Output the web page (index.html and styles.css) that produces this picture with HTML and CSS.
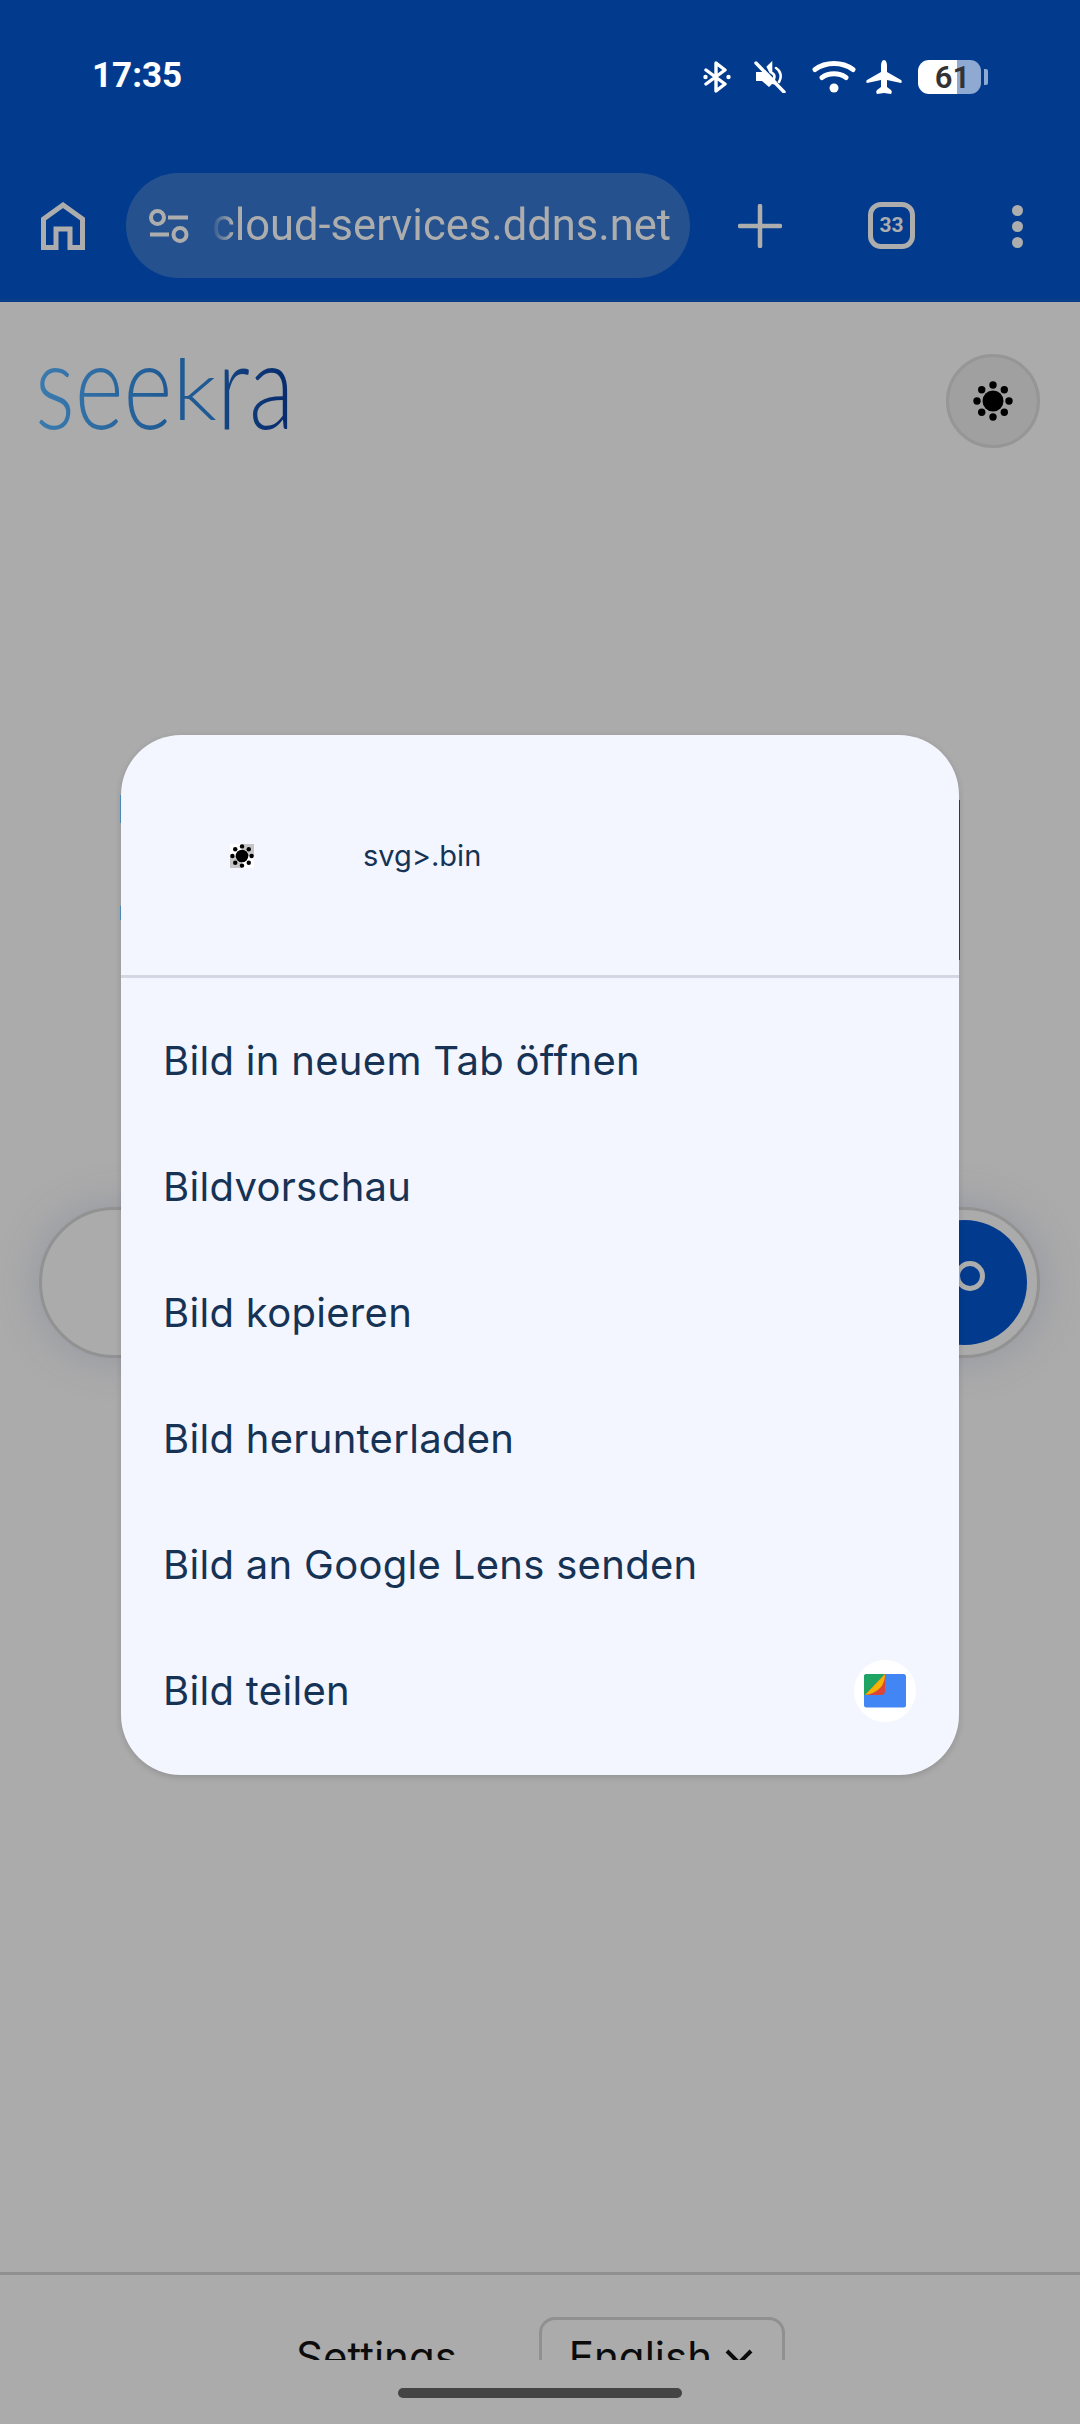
FILE: index.html
```html
<!DOCTYPE html>
<html lang="de">
<head>
  <meta charset="UTF-8">
  <meta name="viewport" content="width=device-width, initial-scale=1.0">
  <title>seekra</title>
  <link rel="stylesheet" href="styles.css">
</head>
<body>

  <!-- Android status bar -->
  <div class="status-bar">
    <span class="clock">17:35</span>
    <div class="status-icons">
      <svg class="ic-bt" width="28" height="32" viewBox="0 0 28 32"><path d="M3 9 22 23 13 30V2l9 7L3 23" fill="none" stroke="#fff" stroke-width="3.4" stroke-linejoin="round" stroke-linecap="round"/><circle cx="2.5" cy="16" r="2.2" fill="#fff"/><circle cx="25.5" cy="16" r="2.2" fill="#fff"/></svg>
      <svg class="ic-mute" width="32" height="32" viewBox="0 0 32 32"><path d="M2 11h6l3-2 12 12v3l-5-1-3 3-7-6H2z" fill="#fff"/><path d="M14 6l3-3v9zM22 7c5 3 6 9 3 14M18 12c2 1 3 3 2 6" fill="none" stroke="#fff" stroke-width="2.6" stroke-linecap="round"/><path d="M2 2 30 31" stroke="#fff" stroke-width="3.4" stroke-linecap="round"/></svg>
      <svg class="ic-wifi" width="44" height="34" viewBox="0 0 44 34"><path d="M3 9.5c11-8 27-8 38 0M10 17.5c7-5 17-5 24 0" fill="none" stroke="#fff" stroke-width="5" stroke-linecap="round"/><circle cx="22" cy="28" r="4.5" fill="#fff"/></svg>
      <svg class="ic-plane" width="36" height="34" viewBox="0 0 36 34"><path d="M18 0c2 0 3 3 3 6v6l14 8c1 .6 1 2.500 0 3l-14-3v7l4 3c1 1 1 3 0 4l-7-1-7 1c-1-1-1-3 0-4l4-3v-7L1 23c-1-.5-1-2.400 0-3l14-8V6c0-3 1-6 3-6z" fill="#fff"/></svg>
      <div class="battery">
        <div class="battery-body"><span class="battery-level">61</span></div>
        <div class="battery-nub"></div>
      </div>
    </div>
  </div>

  <!-- Browser toolbar -->
  <div class="toolbar">
    <svg class="home-icon" width="44" height="48" viewBox="0 0 44 48"><path d="M2.500 45.500V17L22 3l19.500 14v28.500H29V27H15v18.500z" fill="none" stroke="#adadad" stroke-width="5"/></svg>
    <div class="url-pill">
      <svg class="tune-icon" width="40" height="34" viewBox="0 0 40 34"><circle cx="8.500" cy="8.500" r="6.500" fill="none" stroke="#adadad" stroke-width="4"/><circle cx="31" cy="25.500" r="6.500" fill="none" stroke="#adadad" stroke-width="4"/><path d="M19 8.500h20M1 25.500h19" stroke="#adadad" stroke-width="4"/></svg>
      <div class="url-text">cloud-services.ddns.net</div>
    </div>
    <svg class="plus-icon" width="44" height="44" viewBox="0 0 44 44"><path d="M22 2v40M2 22h40" stroke="#adadad" stroke-width="4.500" stroke-linecap="round"/></svg>
    <div class="tab-count">33</div>
    <div class="dots"><span></span><span></span><span></span></div>
  </div>

  <!-- Page behind the dialog -->
  <div class="page">
    <div class="page-main">
      <div class="page-header">
        <div class="logo">see<span class="logo-k">k</span>ra</div>
        <button class="theme-btn">
          <svg width="40" height="40" viewBox="0 0 40 40"><use href="#sun"/></svg>
        </button>
      </div>
      <div class="search-box">
        <div class="search-btn">
          <svg width="60" height="60" viewBox="0 0 60 60"><circle cx="35" cy="23" r="12.500" fill="none" stroke="#adadad" stroke-width="5"/></svg>
        </div>
      </div>
    </div>
    <div class="footer">
      <span class="footer-link">Settings</span>
      <div class="lang-select">
        <span>English</span>
        <svg width="28" height="16" viewBox="0 0 28 16"><path d="M2 2l12 12L26 2" fill="none" stroke="#0c0c0c" stroke-width="4"/></svg>
      </div>
    </div>
    <div class="nav-bar"><div class="nav-handle"></div></div>
  </div>

  <!-- Image context menu -->
  <div class="dialog">
    <div class="dialog-head">
      <div class="thumb">
        <svg width="24" height="24" viewBox="0 0 40 40"><use href="#sun"/></svg>
      </div>
      <span class="file-name">svg&gt;.bin</span>
    </div>
    <ul class="menu">
      <li>Bild in neuem Tab öffnen</li>
      <li>Bildvorschau</li>
      <li>Bild kopieren</li>
      <li>Bild herunterladen</li>
      <li>Bild an Google Lens senden</li>
      <li>
        Bild teilen
        <div class="share-app">
          <svg width="42" height="34" viewBox="0 0 42 34">
            <rect x="0" y="0" width="42" height="33.500" rx="2.500" fill="#4285f4"/>
            <path d="M0 2.500C0 1 1 0 2.500 0H21L1 21H0z" fill="#1fa463"/>
            <path d="M1 21 21 0v17c0 2-1.500 4-4 4z" fill="#db4437"/>
            <path d="M1 21 21 0c0 4-1 10-5 14s-9 6.500-15 7z" fill="#f4b400"/>
          </svg>
        </div>
      </li>
    </ul>
  </div>

  <svg width="0" height="0" class="defs">
    <symbol id="sun" viewBox="0 0 40 40">
      <circle cx="20" cy="20" r="10.500"/>
      <circle cx="20" cy="4" r="3.700"/><circle cx="20" cy="36" r="3.700"/>
      <circle cx="4" cy="20" r="3.700"/><circle cx="36" cy="20" r="3.700"/>
      <circle cx="8.700" cy="8.700" r="3.700"/><circle cx="31.300" cy="8.700" r="3.700"/>
      <circle cx="8.700" cy="31.300" r="3.700"/><circle cx="31.300" cy="31.300" r="3.700"/>
    </symbol>
  </svg>

</body>
</html>
```

FILE: styles.css
```css
html, body {
  margin: 0;
  padding: 0;
}

body {
  position: relative;
  width: 1080px;
  height: 2424px;
  overflow: hidden;
  display: flex;
  flex-direction: column;
  font-family: Roboto, sans-serif;
  background-color: #ababab;
}

.defs {
  position: absolute;
}

/* status bar */
.status-bar {
  height: 110px;
  flex: none;
  box-sizing: border-box;
  padding: 60px 92px 0 92px;
  display: flex;
  justify-content: space-between;
  align-items: flex-start;
  background-color: #023b8e;
  color: #fff;
}

.clock {
  font-size: 35px;
  line-height: 32px;
  font-weight: 700;
}

.status-icons {
  display: flex;
  align-items: center;
  gap: 10px;
  height: 34px;
}

.ic-bt {
  margin-right: 1px;
}

.ic-mute {
  margin-left: 12px;
}

.ic-wifi {
  margin-left: 16px;
}

.battery {
  display: flex;
  align-items: center;
  gap: 3px;
  margin-left: 6px;
}

.battery-body {
  width: 63px;
  height: 34px;
  border-radius: 11px;
  background: linear-gradient(90deg, #fff 0, #fff 39px, #8eaad2 39px);
  display: flex;
  justify-content: center;
  align-items: center;
}

.battery-level {
  font-size: 31px;
  font-weight: 600;
  color: #333;
  margin-left: 6px;
}

.battery-nub {
  width: 4px;
  height: 16px;
  border-radius: 0 2px 2px 0;
  background-color: #8eaad2;
}

/* toolbar */
.toolbar {
  height: 192px;
  flex: none;
  box-sizing: border-box;
  padding: 63px 0 0 41px;
  display: flex;
  align-items: flex-start;
  background-color: #023b8e;
  border-bottom: 3px solid #0a3d88;
}

.home-icon {
  margin-top: 29px;
  flex: none;
}

.url-pill {
  margin-left: 41px;
  width: 564px;
  height: 105px;
  flex: none;
  border-radius: 53px;
  background-color: #25528f;
  display: flex;
  align-items: center;
  box-sizing: border-box;
  padding: 0 19px 0 23px;
  overflow: hidden;
}

.tune-icon {
  flex: none;
}

.url-text {
  margin-left: 16px;
  flex: 1;
  text-align: right;
  font-size: 43.500px;
  color: #adadad;
  white-space: nowrap;
  -webkit-mask-image: linear-gradient(90deg, transparent 6px, #000 28px);
  mask-image: linear-gradient(90deg, transparent 6px, #000 28px);
}

.plus-icon {
  margin: 31px 0 0 48px;
  flex: none;
}

.tab-count {
  margin: 29px 0 0 86px;
  width: 47px;
  height: 47px;
  flex: none;
  box-sizing: border-box;
  border: 5px solid #adadad;
  border-radius: 13px;
  color: #adadad;
  font-size: 21px;
  font-weight: 700;
  text-align: center;
  line-height: 37px;
}

.dots {
  margin: 32px 0 0 97px;
  display: flex;
  flex-direction: column;
  gap: 5px;
}

.dots span {
  width: 11px;
  height: 11px;
  border-radius: 50%;
  background-color: #adadad;
}

/* page under the dialog */
.page {
  flex: 1;
  display: flex;
  flex-direction: column;
}

.page-main {
  flex: 1;
  padding: 52px 40px 0 39px;
}

.page-header {
  display: flex;
  justify-content: space-between;
  align-items: flex-start;
}

.logo {
  height: 94px;
  margin-left: -4px;
  font-family: Lato, sans-serif;
  font-weight: 300;
  font-size: 120px;
  line-height: 58px;
  transform: scaleX(0.78);
  transform-origin: left top;
  white-space: nowrap;
  color: transparent;
  background: linear-gradient(90deg, #3b7cb0 0, #1f5a94 50%, #06296b 100%);
  -webkit-background-clip: text;
  background-clip: text;
}

/* the k of the wordmark only reaches x-height */
.logo-k {
  display: inline-block;
  transform: scaleY(0.7);
  transform-origin: 50% 75%;
  color: #1f5a94;
}

.theme-btn {
  width: 94px;
  height: 94px;
  padding: 0;
  box-sizing: border-box;
  border: 3px solid #969696;
  border-radius: 50%;
  background-color: #a0a0a0;
  display: flex;
  align-items: center;
  justify-content: center;
}

.search-box {
  margin-top: 759px;
  height: 151px;
  box-sizing: border-box;
  border: 3px solid #929292;
  border-radius: 76px;
  background-color: #ababab;
  box-shadow: 0 0 40px rgba(120, 125, 150, 0.45);
  display: flex;
  justify-content: flex-end;
  align-items: center;
  padding-right: 10px;
}

.search-btn {
  width: 125px;
  height: 125px;
  border-radius: 50%;
  background-color: #023b8e;
  display: flex;
  align-items: center;
  justify-content: center;
}

.footer {
  height: 88px;
  flex: none;
  overflow: hidden;
  box-sizing: border-box;
  border-top: 3px solid #909090;
  padding-top: 42px;
  display: flex;
  align-items: flex-start;
  font-family: Inter, sans-serif;
  font-size: 42px;
  color: #0c0c0c;
}

.footer-link {
  margin: 14px 0 0 296px;
}

.lang-select {
  margin-left: 82px;
  width: 246px;
  height: 80px;
  flex: none;
  box-sizing: border-box;
  border: 3px solid #909090;
  border-radius: 16px;
  padding: 11px 0 0 27px;
  display: flex;
  align-items: flex-start;
  gap: 13px;
}

.lang-select svg {
  margin-top: 18px;
  flex: none;
}

.nav-bar {
  height: 64px;
  flex: none;
  display: flex;
  justify-content: center;
  padding-top: 28px;
  box-sizing: border-box;
}

.nav-handle {
  width: 284px;
  height: 10px;
  border-radius: 5px;
  background-color: #444;
}

/* dialog */
.dialog {
  position: absolute;
  left: 121px;
  top: 735px;
  width: 838px;
  height: 1040px;
  border-radius: 60px;
  background-color: #f3f6ff;
  box-shadow: 0 2px 6px rgba(0, 0, 0, 0.15);
  color: #163355;
  font-family: Inter, sans-serif;
}

.dialog::before {
  content: "";
  position: absolute;
  left: 838px;
  top: 65px;
  width: 1px;
  height: 160px;
  background-color: #1c3a70;
}

.dialog::after {
  content: "";
  position: absolute;
  left: -1px;
  top: 60px;
  width: 1px;
  height: 125px;
  background: linear-gradient(#4a88b8 0 28px, transparent 28px 111px, #4a88b8 111px);
}

.dialog-head {
  height: 243px;
  box-sizing: border-box;
  border-bottom: 3px solid #d3d7e3;
  padding: 0 0 0 109px;
  display: flex;
  align-items: center;
}

.thumb {
  width: 24px;
  height: 24px;
  margin-top: 2px;
  background: conic-gradient(#c4c4c4 0 25%, #fff 25% 50%, #c4c4c4 50% 75%, #fff 75%);
}

.thumb svg {
  display: block;
}

.file-name {
  margin-left: 109px;
  font-size: 29px;
}

.menu {
  list-style: none;
  margin: 0;
  padding: 19px 0 0 0;
}

.menu li {
  height: 126px;
  box-sizing: border-box;
  padding: 0 43px 0 42px;
  display: flex;
  justify-content: space-between;
  align-items: center;
  font-size: 40px;
  letter-spacing: 0.3px;
}

.share-app {
  width: 62px;
  height: 62px;
  border-radius: 50%;
  background-color: #fff;
  display: flex;
  align-items: center;
  justify-content: center;
  margin-top: 2px;
}
```
